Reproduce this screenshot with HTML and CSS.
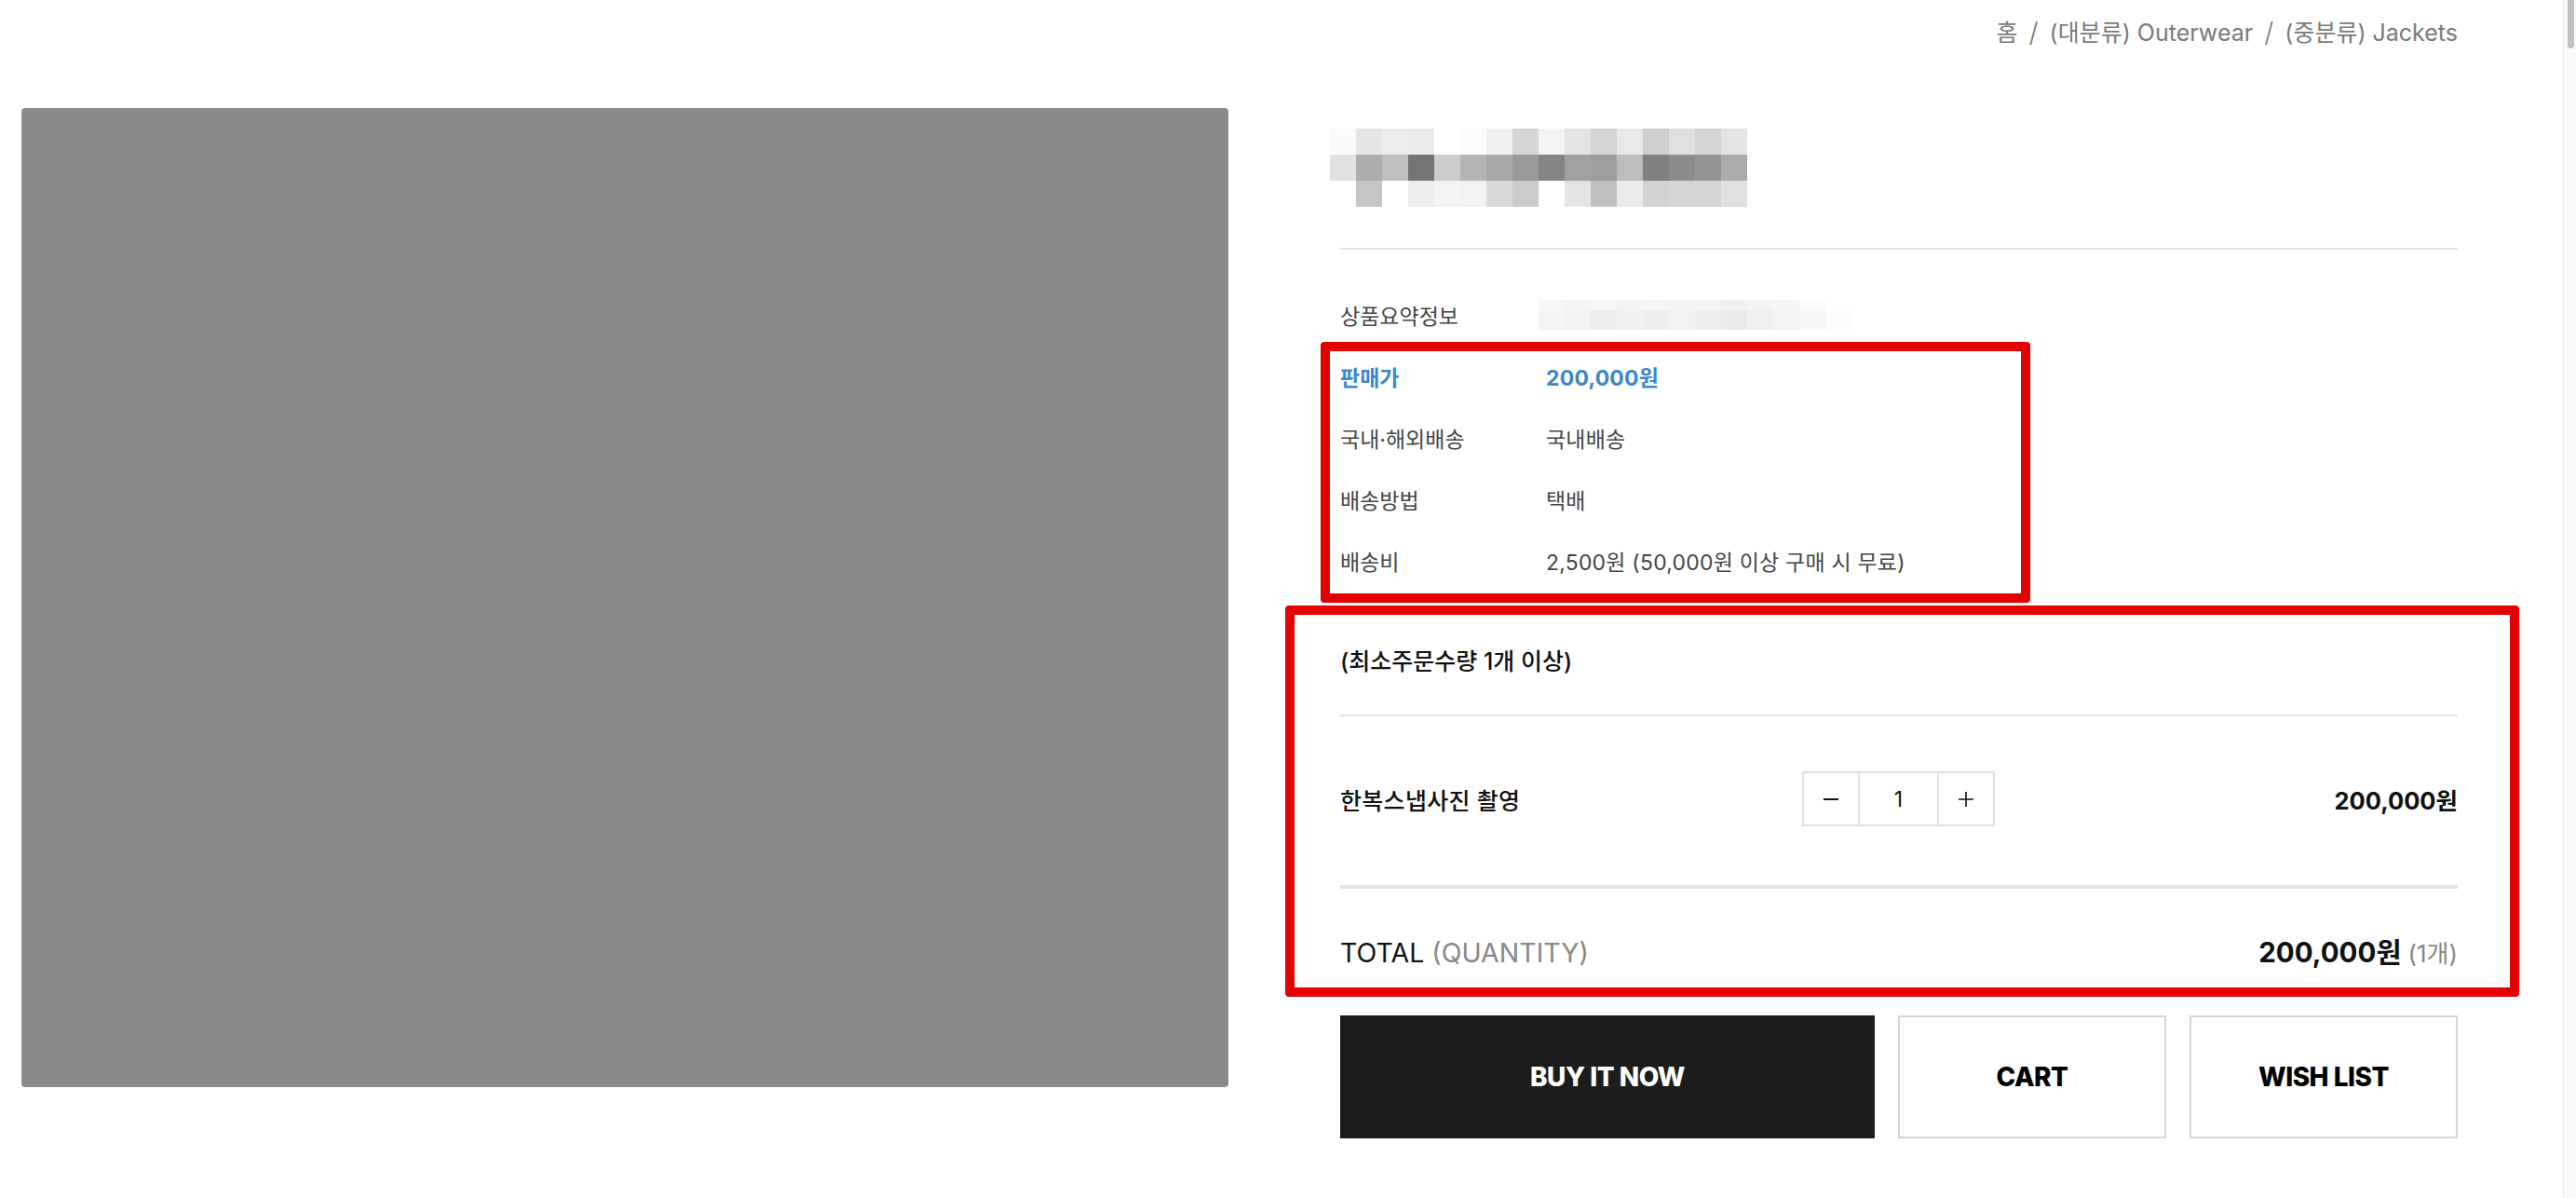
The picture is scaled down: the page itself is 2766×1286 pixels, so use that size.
FILE: index.html
```html
<!DOCTYPE html>
<html lang="ko">
<head>
    <meta charset="UTF-8">
    <meta name="viewport" content="width=device-width, initial-scale=1.0">
    <title>한복스냅사진 촬영</title>
    <link rel="stylesheet" href="styles.css">
</head>
<body>
    <div class="page">
        <nav class="breadcrumb">
            <span>홈</span>
            <span class="sep">/</span>
            <span>(대분류) Outerwear</span>
            <span class="sep">/</span>
            <span>(중분류) Jackets</span>
        </nav>

        <div class="product">
            <div class="product-image"></div>

            <div class="product-info">
                <!-- product name is pixelated in the capture -->
                <div class="title-mosaic" id="titleMosaic"></div>

                <div class="info-table">
                    <div class="info-row">
                        <div class="info-label">상품요약정보</div>
                        <div class="info-value"><div class="summary-mosaic" id="summaryMosaic"></div></div>
                    </div>
                    <div class="info-row price">
                        <div class="info-label">판매가</div>
                        <div class="info-value">200,000원</div>
                    </div>
                    <div class="info-row">
                        <div class="info-label">국내·해외배송</div>
                        <div class="info-value">국내배송</div>
                    </div>
                    <div class="info-row">
                        <div class="info-label">배송방법</div>
                        <div class="info-value">택배</div>
                    </div>
                    <div class="info-row">
                        <div class="info-label">배송비</div>
                        <div class="info-value">2,500원 (50,000원 이상 구매 시 무료)</div>
                    </div>
                </div>

                <div class="min-qty">(최소주문수량 1개 이상)</div>

                <div class="option-row">
                    <div class="option-name">한복스냅사진 촬영</div>
                    <div class="qty">
                        <button class="qty-btn" aria-label="minus">
                            <svg width="18" height="18" viewBox="0 0 18 18"><path d="M1 9h16" stroke="#111" stroke-width="2"/></svg>
                        </button>
                        <div class="qty-input">1</div>
                        <button class="qty-btn" aria-label="plus">
                            <svg width="18" height="18" viewBox="0 0 18 18"><path d="M1 9h16M9 1v16" stroke="#111" stroke-width="1.6"/></svg>
                        </button>
                    </div>
                    <div class="option-price">200,000원</div>
                </div>

                <div class="total-row">
                    <div class="total-label">TOTAL <span>(QUANTITY)</span></div>
                    <div class="total-price">200,000원 <span>(1개)</span></div>
                </div>

                <div class="actions">
                    <button class="btn btn-buy">BUY IT NOW</button>
                    <button class="btn">CART</button>
                    <button class="btn">WISH LIST</button>
                </div>
            </div>
        </div>

        <!-- red markup boxes drawn over the capture -->
        <div class="annotation box-info"></div>
        <div class="annotation box-order"></div>
    </div>

    <div class="scrollbar"><div class="scrollbar-thumb"></div></div>

    <script>
        // Mosaic colours sampled from the capture
        const titleCells = [
            'fafafa','e4e4e4','ececec','eaeaea','ffffff','fbfbfb','f0f0f0','d6d6d6','f3f3f3','e4e4e4','d5d5d5','e8e8e8','cfcfcf','e0e0e0','d6d6d6','e4e4e4',
            'e1e1e1','adadad','bfbfbf','747474','cccccc','b4b4b4','a9a9a9','9a9a9a','858585','a1a1a1','9e9e9e','bdbdbd','808080','8d8d8d','959595','acacac',
            'ffffff','c5c5c5','ffffff','ededed','f3f3f3','f1f1f1','d8d8d8','cbcbcb','ffffff','e4e4e4','bfbfbf','ebebeb','d3d3d3','d6d6d6','d6d6d6','e0e0e0'
        ];
        const summaryCells = [
            'f6f6f6','f4f4f4','f8f8f8','f3f3f3','f5f5f5','f2f2f2','f4f4f4','f0f0f0','f3f3f3','f5f5f5','fbfbfb','ffffff',
            'f4f4f4','f2f2f2','ececec','f0f0f0','eeeeee','f1f1f1','ededed','e9e9e9','efefef','f3f3f3','f7f7f7','fcfcfc'
        ];

        function fillMosaic(id, cells) {
            const box = document.getElementById(id);
            cells.forEach(c => {
                const cell = document.createElement('div');
                cell.style.background = '#' + c;
                box.appendChild(cell);
            });
        }

        fillMosaic('titleMosaic', titleCells);
        fillMosaic('summaryMosaic', summaryCells);
    </script>
</body>
</html>
```

FILE: styles.css
```css
* {
    margin: 0;
    padding: 0;
    box-sizing: border-box;
}

body {
    font-family: Inter, "Noto Sans CJK KR", sans-serif;
    background-color: #fff;
    color: #111;
    overflow: hidden;
}

.page {
    position: relative;
    width: 2639px;
    height: 1286px;
}

.breadcrumb {
    display: flex;
    justify-content: flex-end;
    gap: 12px;
    padding-top: 20px;
    font-size: 25px;
    line-height: 30px;
    color: #7a7a7a;
}

.breadcrumb .sep {
    font-weight: 300;
    font-size: 29px;
}

.product {
    display: flex;
    gap: 120px;
    padding-left: 23px;
    margin-top: 66px;
}

.product-image {
    flex: none;
    width: 1296px;
    height: 1051px;
    background-color: #8a8a8a;
    border-radius: 4px;
}

.product-info {
    width: 1200px;
}

.title-mosaic {
    display: grid;
    grid-template-columns: repeat(16, 28px);
    grid-auto-rows: 28px;
    margin: 22px 0 0 -11px;
}

.info-table {
    border-top: 2px solid #e3e3e3;
    margin-top: 44px;
    padding-top: 37px;
}

.info-row {
    display: flex;
    align-items: center;
    height: 66px;
    font-size: 23px;
    color: #444;
}

.info-label {
    width: 221px;
}

.info-value {
    letter-spacing: 0.2px;
}

.info-row.price {
    color: #3b87c8;
    font-weight: 700;
}

.summary-mosaic {
    display: grid;
    grid-template-columns: repeat(12, 28px);
    grid-template-rows: 11px 21px;
    margin-left: -8px;
}

.min-qty {
    margin-top: 45px;
    padding-bottom: 27px;
    line-height: 60px;
    font-size: 25px;
    font-weight: 500;
    color: #111;
    border-bottom: 2px solid #e3e3e3;
}

.option-row {
    display: grid;
    grid-template-columns: 496px 207px 1fr;
    align-items: center;
    padding: 59px 0 63px;
    border-bottom: 4px solid #e4e4e4;
}

.option-name {
    font-size: 25px;
    font-weight: 500;
    letter-spacing: 0.3px;
}

.qty {
    display: flex;
    height: 59px;
    border: 2px solid #e0e0e0;
}

.qty-btn {
    width: 58px;
    border: none;
    background: #fff;
    display: flex;
    align-items: center;
    justify-content: center;
}

.qty-input {
    flex: 1;
    display: flex;
    align-items: center;
    justify-content: center;
    border-left: 2px solid #e6e6e6;
    border-right: 2px solid #e6e6e6;
    font-size: 23px;
}

.option-price {
    text-align: right;
    font-size: 25.5px;
    font-weight: 700;
}

.total-row {
    display: flex;
    justify-content: space-between;
    align-items: center;
    padding: 48px 0 46px;
    line-height: 40px;
}

.total-label {
    font-size: 28.5px;
}

.total-label span {
    color: #888;
}

.total-price {
    font-size: 29.5px;
    font-weight: 700;
}

.total-price span {
    font-size: 26px;
    font-weight: 400;
    color: #888;
}

.actions {
    display: grid;
    grid-template-columns: 574px 1fr 1fr;
    gap: 25px;
}

.btn {
    height: 132px;
    border: 2px solid #d6d6d6;
    background-color: #fff;
    color: #000;
    font-family: Inter, sans-serif;
    font-size: 28px;
    font-weight: 800;
    letter-spacing: -0.5px;
}

.btn-buy {
    background-color: #1c1c1c;
    border-color: #1c1c1c;
    color: #fff;
}

.annotation {
    position: absolute;
    border: 10px solid #e50000;
    border-radius: 4px;
}

.box-info {
    left: 1418px;
    top: 367px;
    width: 762px;
    height: 280px;
}

.box-order {
    left: 1380px;
    top: 650px;
    width: 1325px;
    height: 420px;
}

.scrollbar {
    position: fixed;
    top: 0;
    right: 0;
    width: 14px;
    height: 100%;
    background-color: #fafafa;
    border-left: 1px solid #e8e8e8;
}

.scrollbar-thumb {
    margin: 0 2px 0 4px;
    height: 52px;
    background-color: #c2c2c2;
    border-radius: 0 0 5px 5px;
}
```
